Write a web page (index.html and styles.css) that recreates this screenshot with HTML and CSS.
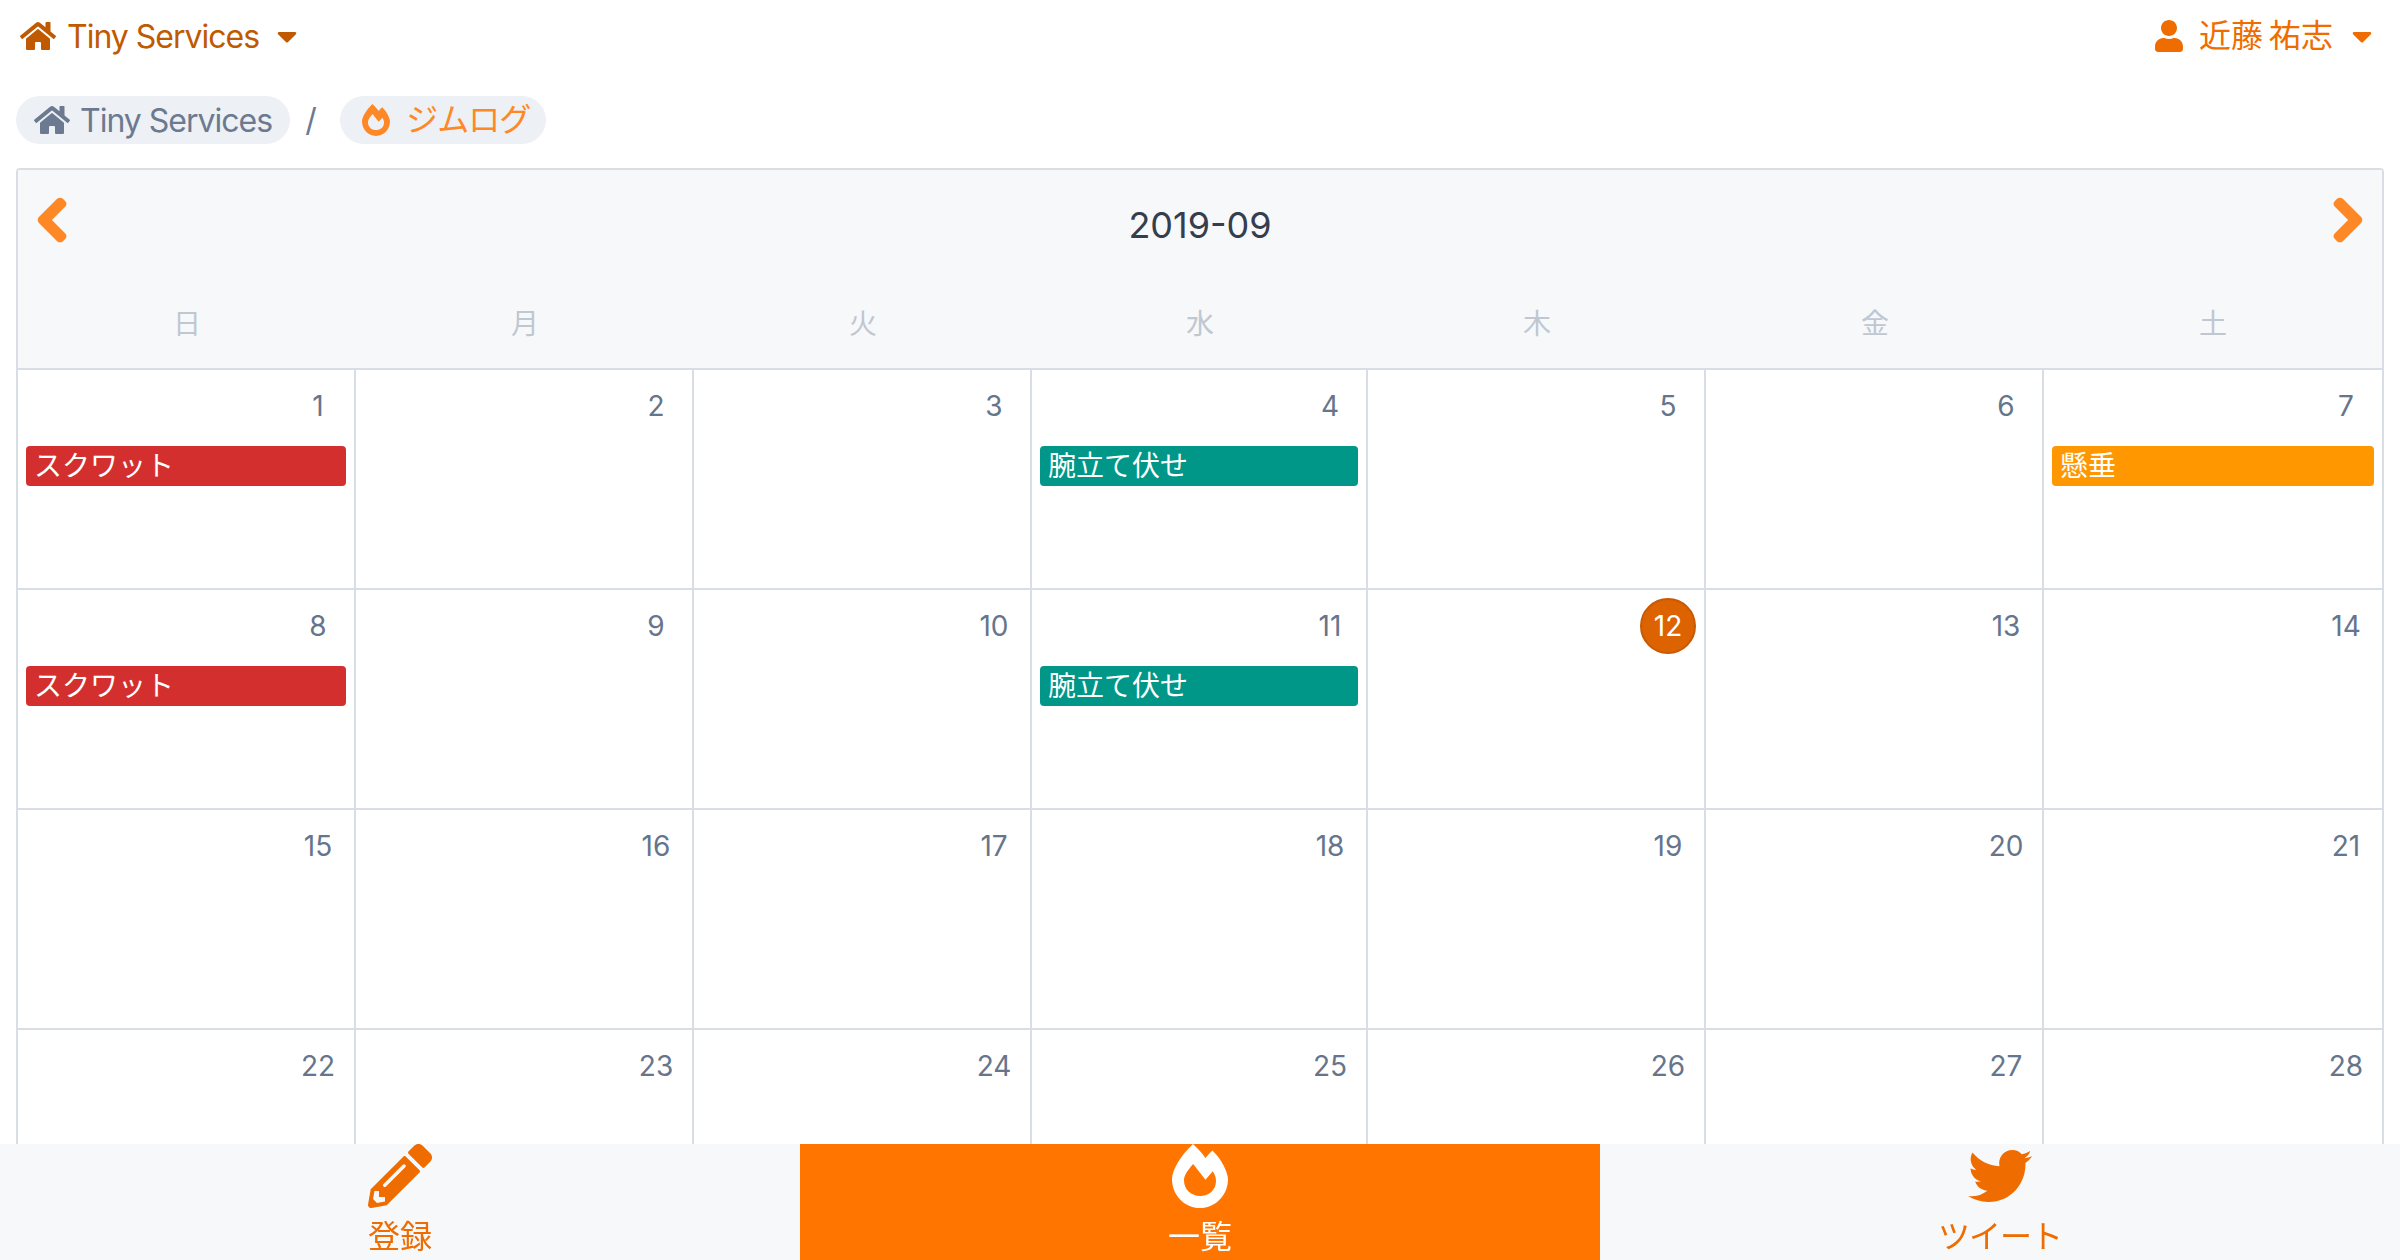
FILE: index.html
```html
<!DOCTYPE html>
<html lang="ja">
<head>
<meta charset="utf-8">
<title>ジムログ</title>
<link rel="stylesheet" href="styles.css">
</head>
<body>
<svg class="defs" aria-hidden="true">
  <symbol id="i-home" viewBox="0 0 576 512"><path d="M280.37 148.26L96 300.11V464a16 16 0 0 0 16 16l112.06-.29a16 16 0 0 0 15.92-16V368a16 16 0 0 1 16-16h64a16 16 0 0 1 16 16v95.64a16 16 0 0 0 16 16.05L464 480a16 16 0 0 0 16-16V300L295.67 148.26a12.19 12.19 0 0 0-15.3 0zM571.6 251.47L488 182.56V44.05a12 12 0 0 0-12-12h-56a12 12 0 0 0-12 12v72.61L318.47 43a48 48 0 0 0-61 0L4.34 251.47a12 12 0 0 0-1.6 16.9l25.5 31A12 12 0 0 0 45.15 301l235.22-193.74a12.19 12.19 0 0 1 15.3 0L530.9 301a12 12 0 0 0 16.9-1.6l25.5-31a12 12 0 0 0-1.7-16.93z"/></symbol>
  <symbol id="i-caret" viewBox="0 0 320 512"><path d="M31.3 192h257.3c17.8 0 26.7 21.5 14.1 34.1L174.1 354.8c-7.8 7.8-20.5 7.8-28.3 0L17.2 226.1C4.6 213.5 13.5 192 31.3 192z"/></symbol>
  <symbol id="i-flame" viewBox="0 0 448 512"><path d="M323.56 51.2c-20.8 19.3-39.58 39.59-56.22 59.97C240.08 73.62 206.28 35.53 168 0 69.74 91.17 0 209.96 0 281.6 0 408.85 100.29 512 224 512s224-103.15 224-230.4c0-53.27-51.98-163.14-124.44-230.4zm-19.47 340.65C282.43 407.01 255.72 416 226.86 416 154.71 416 96 368.26 96 290.75c0-38.61 24.31-72.63 72.79-130.75 6.93 7.98 98.83 125.34 98.83 125.34l58.63-66.88c4.14 6.85 7.91 13.55 11.27 19.97 27.35 52.19 15.81 118.97-33.43 153.42z"/></symbol>
</svg>

<header class="topbar">
  <a class="brand">
    <svg class="icon-home"><use href="#i-home"/></svg>
    <span class="latin">Tiny Services</span>
    <svg class="icon-caret"><use href="#i-caret"/></svg>
  </a>
  <a class="user">
    <svg class="icon-user" viewBox="0 0 448 512"><path d="M224 256c70.7 0 128-57.3 128-128S294.7 0 224 0 96 57.3 96 128s57.3 128 128 128zm89.6 32h-16.7c-22.2 10.2-46.9 16-72.9 16s-50.6-5.8-72.9-16h-16.7C60.2 288 0 348.2 0 422.4V464c0 26.5 21.5 48 48 48h352c26.5 0 48-21.5 48-48v-41.6c0-74.2-60.2-134.4-134.4-134.4z"/></svg>
    <span class="user-name">近藤 祐志</span>
    <svg class="icon-caret"><use href="#i-caret"/></svg>
  </a>
</header>

<nav class="crumbs">
  <a class="pill pill-home"><svg class="icon-home"><use href="#i-home"/></svg><span class="latin">Tiny Services</span></a>
  <span class="slash">/</span>
  <a class="pill pill-current"><svg class="icon-flame-small"><use href="#i-flame"/></svg><span class="kana">ジムログ</span></a>
</nav>

<main class="calendar">
  <div class="cal-head">
    <div class="cal-title-row">
      <svg class="chevron" viewBox="0 0 320 512"><path d="M34.52 239.03L228.87 44.69c9.37-9.37 24.57-9.37 33.94 0l22.67 22.67c9.36 9.36 9.37 24.52.04 33.9L131.49 256l154.02 154.75c9.34 9.38 9.32 24.54-.04 33.9l-22.67 22.67c-9.37 9.37-24.57 9.37-33.94 0L34.52 272.97c-9.37-9.37-9.37-24.57 0-33.94z"/></svg>
      <h1 class="cal-title">2019-09</h1>
      <svg class="chevron" viewBox="0 0 320 512"><path d="M285.476 272.971L91.132 467.314c-9.373 9.373-24.569 9.373-33.941 0l-22.667-22.667c-9.357-9.357-9.375-24.522-.04-33.901L188.505 256 34.484 101.255c-9.335-9.379-9.317-24.544.04-33.901l22.667-22.667c9.373-9.373 24.569-9.373 33.941 0L285.475 239.03c9.373 9.372 9.373 24.568.001 33.941z"/></svg>
    </div>
    <div class="weekdays">
      <span>日</span><span>月</span><span>火</span><span>水</span><span>木</span><span>金</span><span>土</span>
    </div>
  </div>
  <div class="grid">
    <div class="cell"><div class="date">1</div><div class="event red">スクワット</div></div>
    <div class="cell"><div class="date">2</div></div>
    <div class="cell"><div class="date">3</div></div>
    <div class="cell"><div class="date">4</div><div class="event teal">腕立て伏せ</div></div>
    <div class="cell"><div class="date">5</div></div>
    <div class="cell"><div class="date">6</div></div>
    <div class="cell"><div class="date">7</div><div class="event amber">懸垂</div></div>
    <div class="cell"><div class="date">8</div><div class="event red">スクワット</div></div>
    <div class="cell"><div class="date">9</div></div>
    <div class="cell"><div class="date">10</div></div>
    <div class="cell"><div class="date">11</div><div class="event teal">腕立て伏せ</div></div>
    <div class="cell"><div class="date today">12</div></div>
    <div class="cell"><div class="date">13</div></div>
    <div class="cell"><div class="date">14</div></div>
    <div class="cell"><div class="date">15</div></div>
    <div class="cell"><div class="date">16</div></div>
    <div class="cell"><div class="date">17</div></div>
    <div class="cell"><div class="date">18</div></div>
    <div class="cell"><div class="date">19</div></div>
    <div class="cell"><div class="date">20</div></div>
    <div class="cell"><div class="date">21</div></div>
    <div class="cell"><div class="date">22</div></div>
    <div class="cell"><div class="date">23</div></div>
    <div class="cell"><div class="date">24</div></div>
    <div class="cell"><div class="date">25</div></div>
    <div class="cell"><div class="date">26</div></div>
    <div class="cell"><div class="date">27</div></div>
    <div class="cell"><div class="date">28</div></div>
  </div>
</main>

<footer class="tabbar">
  <a class="tab">
    <svg class="tab-icon" viewBox="0 0 512 512"><path d="M497.9 142.1l-46.1 46.1c-4.7 4.7-12.3 4.7-17 0l-111-111c-4.7-4.7-4.7-12.3 0-17l46.1-46.1c18.7-18.7 49.1-18.7 67.9 0l60.1 60.1c18.8 18.7 18.8 49.1 0 67.9zM284.2 99.8L21.6 362.4.4 483.9c-2.9 16.4 11.4 30.6 27.8 27.8l121.5-21.3 262.6-262.6c4.7-4.7 4.7-12.3 0-17l-111-111c-4.8-4.7-12.4-4.7-17.1 0zM124.1 339.9c-5.5-5.5-5.5-14.3 0-19.8l154-154c5.5-5.5 14.3-5.5 19.8 0s5.5 14.3 0 19.8l-154 154c-5.5 5.5-14.3 5.5-19.8 0zM88 424h48v36.3l-64.5 11.3-31.1-31.1L51.7 376H88v48z"/></svg>
    <span>登録</span>
  </a>
  <a class="tab tab-active">
    <svg class="tab-icon tab-flame"><use href="#i-flame"/></svg>
    <span>一覧</span>
  </a>
  <a class="tab">
    <svg class="tab-icon" viewBox="0 0 512 512"><path d="M459.37 151.716c.325 4.548.325 9.097.325 13.645 0 138.72-105.583 298.558-298.558 298.558-59.452 0-114.68-17.219-161.137-47.106 8.447.974 16.568 1.299 25.34 1.299 49.055 0 94.213-16.568 130.274-44.832-46.132-.975-84.792-31.188-98.112-72.772 6.498.974 12.995 1.624 19.818 1.624 9.421 0 18.843-1.3 27.614-3.573-48.081-9.747-84.143-51.98-84.143-102.985v-1.299c13.969 7.797 30.214 12.67 47.431 13.319-28.264-18.843-46.781-51.005-46.781-87.391 0-19.492 5.197-37.36 14.294-52.954 51.655 63.675 129.3 105.258 216.365 109.807-1.624-7.797-2.599-15.918-2.599-24.04 0-57.828 46.782-104.934 104.934-104.934 30.213 0 57.502 12.67 76.67 33.137 23.715-4.548 46.456-13.645 66.599-25.34-7.798 24.366-24.366 44.833-46.132 57.827 21.117-2.273 41.584-8.122 60.426-16.243-14.292 20.791-32.161 39.308-52.628 54.253z"/></svg>
    <span class="kana">ツイート</span>
  </a>
</footer>
</body>
</html>
```

FILE: styles.css
```css
* { box-sizing: border-box; }

html, body {
  margin: 0;
  height: 100%;
  overflow: hidden;
}

body {
  background: #fff;
  font-family: Inter, "Noto Sans CJK JP", sans-serif;
  font-size: 32px;
  line-height: 48px;
  color: #4a5568;
  padding: 0 16px;
}

.defs { display: none; }

svg { display: block; fill: currentColor; flex: none; }

.latin {
  letter-spacing: -1px;
  padding-top: 2px;
}

.kana { letter-spacing: -1px; }

.icon-home { width: 36px; height: 32px; }
.icon-caret { width: 20px; height: 32px; }
.icon-user { width: 28px; height: 32px; }
.icon-flame-small { width: 28px; height: 32px; }

.topbar {
  display: flex;
  justify-content: space-between;
  align-items: center;
  height: 72px;
  margin-bottom: 24px;
  padding: 0 12px 0 4px;
}

.brand, .user {
  display: flex;
  align-items: center;
}

.brand { color: #c05a00; }
.brand .latin { margin: 0 18px 0 11px; }

.user { color: #ef6c00; }
.user-name {
  margin: 0 19px 0 16px;
  word-spacing: -3px;
}

.crumbs {
  display: flex;
  align-items: center;
  height: 48px;
  margin-bottom: 24px;
}

.pill {
  display: flex;
  align-items: center;
  height: 48px;
  border-radius: 24px;
  background: #edf0f4;
}

.pill-home {
  padding: 0 18px;
  color: #6b7a90;
}
.pill-home span { margin-left: 10px; }

.pill-current {
  padding: 0 16px 0 22px;
  color: #ff8826;
}
.pill-current span { margin-left: 16px; }

.slash {
  width: 50px;
  padding-right: 8px;
  text-align: center;
  color: #6b7a90;
}

.calendar {
  border: 2px solid #d9dee4;
  border-bottom: 0;
  border-radius: 4px 4px 0 0;
}

.cal-head {
  background: #f7f8fa;
  border-bottom: 2px solid #d9dee4;
  height: 200px;
}

.cal-title-row {
  display: flex;
  justify-content: space-between;
  align-items: center;
  height: 100px;
  padding: 0 19px;
}

.chevron {
  width: 30px;
  height: 48px;
  color: #ff8826;
  stroke: currentColor;
  stroke-width: 40;
  stroke-linejoin: round;
  overflow: visible;
}

.cal-title {
  margin: 10px 0 0;
  font-size: 36px;
  font-weight: 400;
  color: #343e4e;
}

.weekdays,
.grid {
  display: grid;
  grid-template-columns: 338px 338px 338px 336px 338px 338px 1fr;
}

.weekdays {
  margin-top: 30px;
  font-size: 28px;
  text-align: center;
  color: #bfc7d1;
}

.grid {
  grid-auto-rows: 220px;
}

.cell {
  border-right: 2px solid #d9dee4;
  border-bottom: 2px solid #d9dee4;
  padding-top: 8px;
}
.cell:nth-child(7n) { border-right: 0; }

.date {
  display: flex;
  align-items: center;
  justify-content: center;
  width: 56px;
  height: 56px;
  margin: 0 8px 0 auto;
  border-radius: 50%;
  font-size: 28px;
  color: #66758c;
}

.today {
  background: #dd6200;
  border: 2px solid #c85a04;
  color: #fff;
}

.event {
  height: 40px;
  margin: 12px 8px 0;
  padding: 0 8px;
  border-radius: 4px;
  font-size: 28px;
  line-height: 40px;
  color: #fff;
}
.red { background: #d32f2f; }
.teal { background: #009688; }
.amber { background: #ff9800; }

.tabbar {
  position: fixed;
  left: 0;
  right: 0;
  bottom: 0;
  display: grid;
  grid-template-columns: repeat(3, 1fr);
  height: 116px;
  background: #f7f8fa;
  color: #ef6c00;
}

.tab {
  display: flex;
  flex-direction: column;
  align-items: center;
}
.tab span { line-height: 58px; }

.tab-icon { width: 64px; height: 64px; }
.tab-flame { width: 56px; }

.tab-active {
  background: #ff7500;
  color: #fff;
}
```
